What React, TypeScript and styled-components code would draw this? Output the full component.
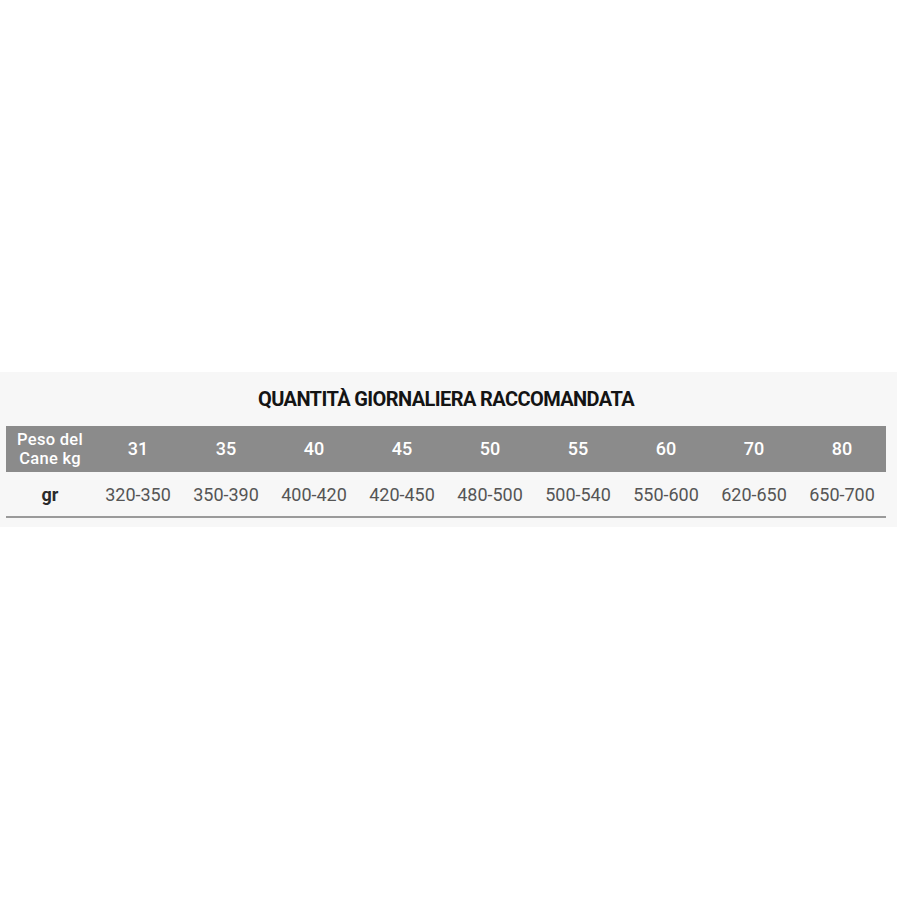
import styled, { createGlobalStyle } from 'styled-components';

const GlobalStyle = createGlobalStyle`
  html, body {
    margin: 0;
    padding: 0;
    background: #ffffff;
  }
  body {
    font-family: Roboto, "Liberation Sans", sans-serif;
  }
`;

const Page = styled.div`
  height: 900px;
  display: flex;
  flex-direction: column;
  justify-content: flex-start;
  padding-top: 372px;
  box-sizing: border-box;
`;

const Panel = styled.section`
  width: 897px;
  background: #f7f7f7;
  padding: 14px 0 9px 6px;
  box-sizing: border-box;
`;

const Title = styled.h2`
  margin: 0 0 14px;
  width: 880px;
  text-align: center;
  font-size: 20px;
  font-weight: 700;
  letter-spacing: -0.6px;
  line-height: 26px;
  color: #141414;
`;

const Table = styled.table`
  width: 880px;
  border-collapse: collapse;
  table-layout: fixed;
  border-bottom: 2px solid #9a9a9a;
`;

const HeadRow = styled.tr`
  background: #8b8b8b;
  height: 46px;
`;

const HeadCell = styled.th`
  width: 88px;
  padding: 0;
  text-align: center;
  color: #ffffff;
  font-weight: 500;
  font-size: 18px;
  line-height: 20px;
`;

const LabelLine = styled.span`
  display: block;
  font-size: 16.5px;
  line-height: 19px;
  letter-spacing: 0.3px;
`;

const BodyRow = styled.tr`
  height: 45px;
`;

const BodyCell = styled.td<{ $label?: boolean }>`
  padding: 0;
  text-align: center;
  font-size: 18px;
  font-weight: ${(p) => (p.$label ? 700 : 400)};
  color: ${(p) => (p.$label ? '#2a2a2a' : '#555555')};
`;

const weights = ['31', '35', '40', '45', '50', '55', '60', '70', '80'];
const grams = [
  '320-350',
  '350-390',
  '400-420',
  '420-450',
  '480-500',
  '500-540',
  '550-600',
  '620-650',
  '650-700',
];

export default function App() {
  return (
    <>
      <GlobalStyle />
      <Page>
        <Panel>
          <Title>QUANTITÀ GIORNALIERA RACCOMANDATA</Title>
          <Table>
            <thead>
              <HeadRow>
                <HeadCell>
                  <LabelLine>Peso del</LabelLine>
                  <LabelLine>Cane kg</LabelLine>
                </HeadCell>
                {weights.map((w) => (
                  <HeadCell key={w}>{w}</HeadCell>
                ))}
              </HeadRow>
            </thead>
            <tbody>
              <BodyRow>
                <BodyCell $label>gr</BodyCell>
                {grams.map((g) => (
                  <BodyCell key={g}>{g}</BodyCell>
                ))}
              </BodyRow>
            </tbody>
          </Table>
        </Panel>
      </Page>
    </>
  );
}
